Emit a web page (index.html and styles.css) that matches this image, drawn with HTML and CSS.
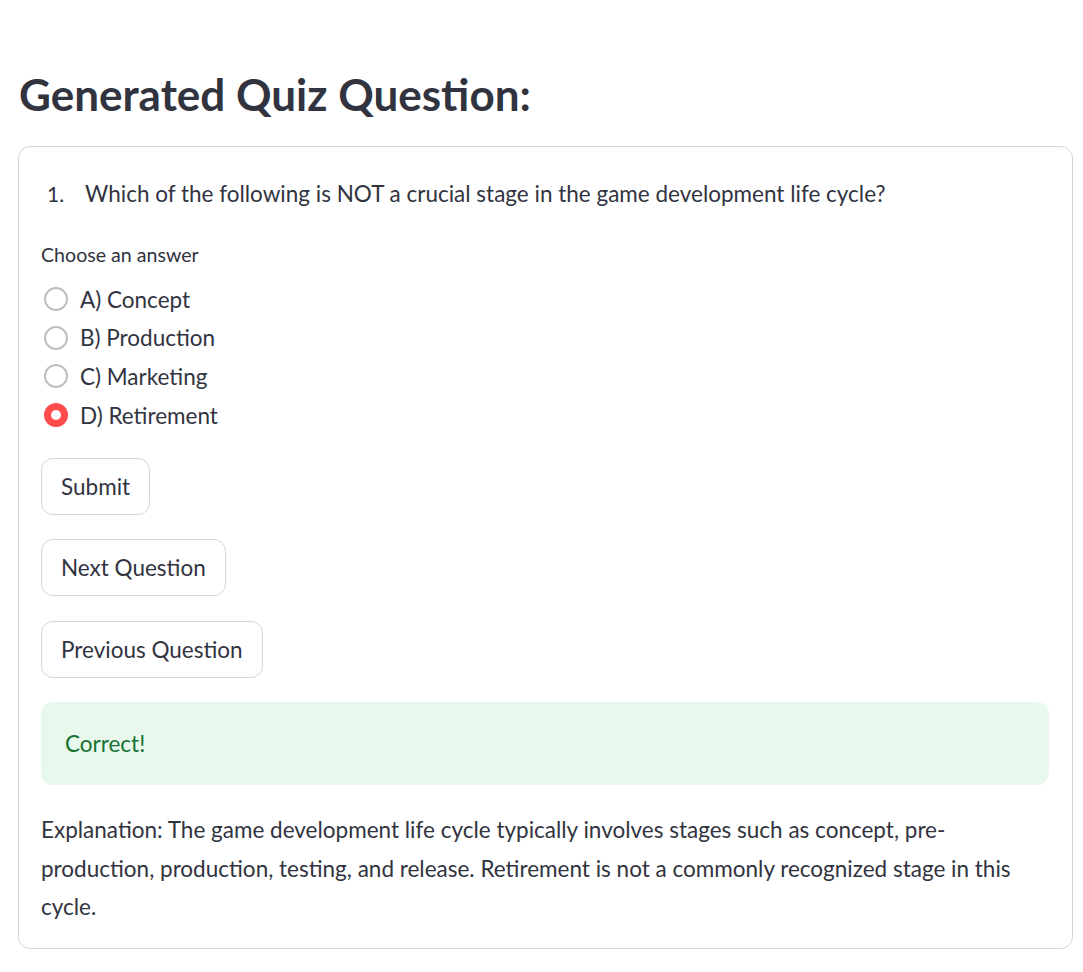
FILE: index.html
```html
<!DOCTYPE html>
<html lang="en">
<head>
<meta charset="utf-8">
<title>Generated Quiz Question</title>
<link rel="stylesheet" href="styles.css">
</head>
<body>
<main class="page">
  <h1 class="title">Generated Quiz Question:</h1>
  <form class="quiz">
    <ol class="question">
      <li>Which of the following is NOT a crucial stage in the game development life cycle?</li>
    </ol>
    <div class="radio-group">
      <div class="radio-label">Choose an answer</div>
      <label class="option"><span class="dot"></span><span class="option-text">A) Concept</span></label>
      <label class="option"><span class="dot"></span><span class="option-text">B) Production</span></label>
      <label class="option"><span class="dot"></span><span class="option-text">C) Marketing</span></label>
      <label class="option"><span class="dot dot-on"></span><span class="option-text">D) Retirement</span></label>
    </div>
    <div class="buttons">
      <button type="button" class="btn">Submit</button>
      <button type="button" class="btn">Next Question</button>
      <button type="button" class="btn">Previous Question</button>
    </div>
    <div class="alert">Correct!</div>
    <p class="explanation">Explanation: The game development life cycle typically involves stages such as concept, pre-production, production, testing, and release. Retirement is not a commonly recognized stage in this cycle.</p>
  </form>
</main>
</body>
</html>
```

FILE: styles.css
```css
* { box-sizing: border-box; }

body {
  margin: 0;
  background: #ffffff;
  color: #31333f;
  font-family: Lato, "Noto Sans", sans-serif;
}

.page {
  padding: 64px 10px 0 18px;
}

.title {
  margin: 0 0 22px 1px;
  font-size: 44px;
  line-height: 60px;
  font-weight: 700;
  color: #31333f;
}

.quiz {
  border: 1px solid #d6d6d9;
  border-radius: 12px;
  padding: 28px 23px 21px 22px;
  display: flex;
  flex-direction: column;
}

.question {
  margin: 0;
  padding: 0;
  list-style: none;
  font-size: 22.5px;
  line-height: 38px;
}

.question li {
  display: flex;
}

.question li::before {
  content: "1.";
  flex: none;
  width: 44px;
  padding-left: 6px;
  margin-right: -6px;
  font-size: 21px;
}

.radio-group {
  margin-top: 27px;
  display: flex;
  flex-direction: column;
}

.radio-label {
  font-size: 19.6px;
  line-height: 30px;
  margin-bottom: 10px;
}

.option {
  display: flex;
  align-items: center;
  height: 38.6px;
  font-size: 22.5px;
}

.dot {
  width: 24px;
  height: 24px;
  margin-left: 3px;
  margin-right: 12px;
  border-radius: 50%;
  border: 2px solid #bdbec2;
  background: #fff;
  flex: none;
}

.dot-on {
  border: 7.5px solid #ff4b4b;
  background: #fff;
}

.buttons {
  margin-top: 23.5px;
  display: flex;
  flex-direction: column;
  align-items: flex-start;
  gap: 24.5px;
}

.btn {
  height: 57px;
  padding: 0 19px;
  border: 1px solid #d6d6d9;
  border-radius: 12px;
  background: #fff;
  color: #31333f;
  font-family: inherit;
  font-size: 22.5px;
}

.alert {
  margin-top: 24.5px;
  background: #e8f8ed;
  color: #177233;
  border-radius: 12px;
  padding: 24px 24px;
  font-size: 22.5px;
  line-height: 35px;
}

.explanation {
  margin: 26px 0 0 0;
  font-size: 22.5px;
  line-height: 38.4px;
}
```
